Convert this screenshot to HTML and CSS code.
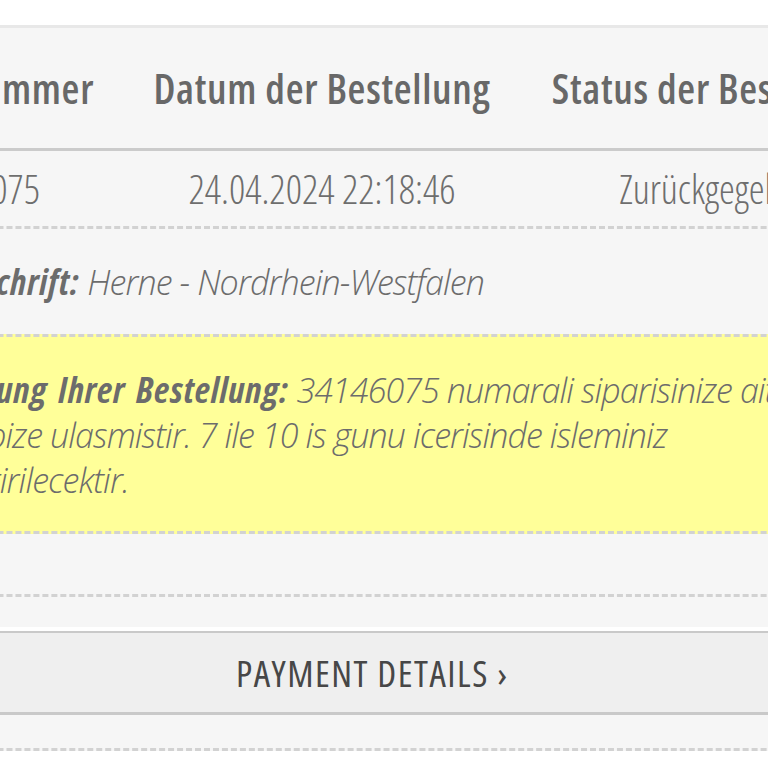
FILE: index.html
```html
<!DOCTYPE html>
<html lang="de">
<head>
<meta charset="utf-8">
<title>Bestellung</title>
<link rel="stylesheet" href="styles.css">
</head>
<body>
<div class="page">
  <div class="panel">
    <div class="thead">
      <div class="cell">Bestellnummer</div>
      <div class="cell">Datum der Bestellung</div>
      <div class="cell">Status der Bestellung</div>
    </div>
    <div class="trow">
      <div class="cell">34146075</div>
      <div class="cell">24.04.2024 22:18:46</div>
      <div class="cell">Zurückgegeben</div>
    </div>
    <div class="detail address"><b>Lieferanschrift:</b> Herne - Nordrhein-Westfalen</div>
    <div class="detail note"><b>Beschreibung Ihrer Bestellung:</b> 34146075 numarali siparisinize ait iade<br>talebiniz bize ulasmistir. 7 ile 10 is gunu icerisinde isleminiz<br>gerceklestirilecektir.</div>
    <div class="empty"></div>
    <div class="actions">
      <button class="pay" type="button">PAYMENT DETAILS ›</button>
    </div>
    <div class="tail"></div>
  </div>
</div>
</body>
</html>
```
FILE: styles.css
```css
html, body {
  margin: 0;
  padding: 0;
  background: #ffffff;
}

.page {
  width: 768px;
  height: 768px;
  overflow: hidden;
  padding-top: 25px;
  box-sizing: border-box;
  font-family: "Open Sans", "DejaVu Sans Condensed", sans-serif;
  color: #6c6c6c;
}

.panel {
  width: 1200px;
  margin-left: -200px;
  background: #f6f6f6;
  border-top: 3px solid #e8e8e8;
}

.thead,
.trow {
  display: grid;
  grid-template-columns: 350px 344px 446px;
  align-items: center;
  text-align: center;
  white-space: nowrap;
}

.thead {
  height: 120px;
  font-size: 41px;
  letter-spacing: 0.7px;
  font-weight: 600;
  font-stretch: 75%;
  color: #686868;
  border-bottom: 3px solid #cbcbcb;
}

.trow {
  height: 75px;
  font-size: 40px;
  font-weight: 300;
  font-stretch: 75%;
  color: #6e6e6e;
  border-bottom: 3px dashed #d2d2d2;
}

.detail {
  font-size: 34px;
  letter-spacing: -0.9px;
  font-style: italic;
  font-weight: 300;
  font-stretch: 100%;
  white-space: nowrap;
}

.detail b {
  font-size: 36px;
  letter-spacing: 0.8px;
  font-weight: 700;
  font-stretch: 75%;
}

.address {
  height: 105px;
  line-height: 105px;
  padding-left: 71px;
}

.note {
  background: #ffff99;
  border-top: 3px dashed #d2d2d2;
  border-bottom: 3px dashed #d2d2d2;
  line-height: 45px;
  padding-top: 30px;
  padding-bottom: 29px;
  padding-left: 64px;
  height: 135px;
}

.note b {
  word-spacing: 4px;
}

.empty {
  height: 60px;
  border-bottom: 3px dashed #d2d2d2;
}

.actions {
  padding-top: 34px;
}

.pay {
  display: block;
  width: 100%;
  height: 84px;
  margin: 0;
  padding: 0 0 0 436px;
  font-family: inherit;
  font-stretch: 75%;
  font-size: 37px;
  letter-spacing: 1.5px;
  font-weight: 400;
  color: #474747;
  background: #efefef;
  border: 0;
  border-top: 2px solid #c9c9c9;
  border-bottom: 3px solid #c9c9c9;
  box-shadow: 0 -4px 0 #ffffff;
  text-align: left;
  cursor: pointer;
}

.tail {
  height: 33px;
  border-bottom: 3px dashed #d2d2d2;
}
```
